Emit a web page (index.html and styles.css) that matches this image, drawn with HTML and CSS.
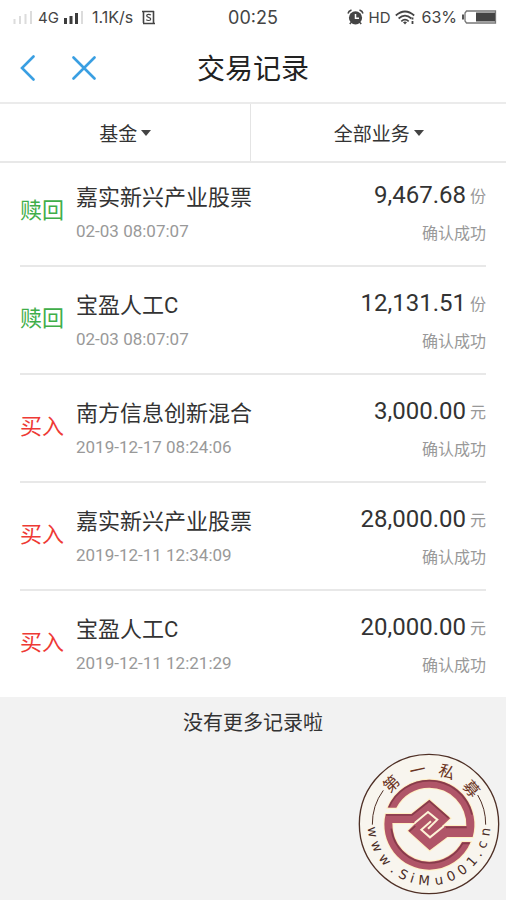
FILE: index.html
```html
<!DOCTYPE html>
<html lang="zh-CN">
<head>
<meta charset="utf-8">
<meta name="viewport" content="width=device-width, initial-scale=1">
<title>交易记录</title>
<link rel="stylesheet" href="styles.css">
</head>
<body>
<div class="status">
  <div class="status-side">
    <svg class="signal" width="20" height="14" viewBox="0 0 20 14" aria-hidden="true"><path d="M1.5 14V9M7 14V6M12.5 14V4M18 14V1" stroke="#dcdcdc" stroke-width="2"/></svg>
    <span class="net">4G</span>
    <svg class="signal" width="20" height="14" viewBox="0 0 20 14" aria-hidden="true"><path d="M1.5 14V8M7 14V6M12.5 14V3" stroke="#3c3c3c" stroke-width="3"/><path d="M18 14V1" stroke="#dcdcdc" stroke-width="2"/></svg>
    <span class="speed">1.1K/s</span>
    <svg class="sim" width="13" height="15" viewBox="0 0 13 15" aria-hidden="true"><path d="M1.5 13V1.5M0 1.5H12M11.5 1V13.5M1 13.5H13" fill="none" stroke="#444" stroke-width="1.6"/><path d="M8.8 5.2C8 4.2 4.7 4 4.7 5.8C4.7 7.8 8.7 6.8 8.7 9C8.7 11 5.2 10.8 4.3 9.6" fill="none" stroke="#444" stroke-width="1.2"/></svg>
  </div>
  <time class="clock">00:25</time>
  <div class="status-side status-right">
    <svg width="17" height="16" viewBox="0 0 17 16" aria-hidden="true"><circle cx="8.5" cy="8.8" r="6.6" fill="#444"/><path d="M1 4.5Q1.5 2 4.5 1M16 4.5Q15.5 2 12.5 1" fill="none" stroke="#444" stroke-width="1.5"/><path d="M4 13.5L2.8 15M13 13.5L14.2 15" stroke="#444" stroke-width="1.5"/><path d="M8.5 5V9.2H12" fill="none" stroke="#fff" stroke-width="1.5"/></svg>
    <span class="net">HD</span>
    <svg width="21" height="15" viewBox="0 0 21 15" aria-hidden="true"><g fill="none" stroke="#444" stroke-width="1.7"><path d="M.8 5.5Q10 -2.5 19.2 5.5"/><path d="M3.6 8.5Q10 2.8 16.4 8.5"/><path d="M6.3 11.3Q10 8 13.7 11.3"/></g><path d="M8 12.2Q10 10.8 12 12.2L10 14.5Z" fill="#444"/><path d="M17.5 7.5V9.5M17.5 11V14" stroke="#444" stroke-width="1.8"/></svg>
    <span class="percent">63%</span>
    <svg width="35" height="14" viewBox="0 0 35 14" aria-hidden="true"><path d="M4.5 1H33.5V13H4.5L3 11V3Z" fill="#fff" stroke="#777" stroke-width="1.3"/><path d="M1 4.5V9.5" stroke="#555" stroke-width="2"/><path d="M14 2.5H33V11.5H14Z" fill="#444"/></svg>
  </div>
</div>
<header class="bar">
  <div class="bar-actions">
    <button class="icon-button" type="button" aria-label="返回"><svg width="16" height="26" viewBox="0 0 16 26"><path d="M13.5 1.5L2 13L13.5 24.5" fill="none" stroke="#3a9fe2" stroke-width="2.6" stroke-linecap="round"/></svg></button>
    <button class="icon-button" type="button" aria-label="关闭"><svg width="24" height="24" viewBox="0 0 24 24"><path d="M1.5 1.5L22.5 22.5M22.5 1.5L1.5 22.5" fill="none" stroke="#3a9fe2" stroke-width="2.6" stroke-linecap="round"/></svg></button>
  </div>
  <h1 class="title">交易记录</h1>
</header>
<nav class="filters">
  <button class="filter" type="button">基金<span class="caret"></span></button>
  <button class="filter" type="button">全部业务<span class="caret"></span></button>
</nav>
<main>
  <ul class="records">
    <li class="record">
      <span class="kind sell">赎回</span>
      <div class="fund"><h2 class="name">嘉实新兴产业股票</h2><time class="date">02-03 08:07:07</time></div>
      <div class="result"><p class="amount">9,467.68<span class="unit">份</span></p><p class="state">确认成功</p></div>
    </li>
    <li class="record">
      <span class="kind sell">赎回</span>
      <div class="fund"><h2 class="name">宝盈人工C</h2><time class="date">02-03 08:07:07</time></div>
      <div class="result"><p class="amount">12,131.51<span class="unit">份</span></p><p class="state">确认成功</p></div>
    </li>
    <li class="record">
      <span class="kind buy">买入</span>
      <div class="fund"><h2 class="name">南方信息创新混合</h2><time class="date">2019-12-17 08:24:06</time></div>
      <div class="result"><p class="amount">3,000.00<span class="unit">元</span></p><p class="state">确认成功</p></div>
    </li>
    <li class="record">
      <span class="kind buy">买入</span>
      <div class="fund"><h2 class="name">嘉实新兴产业股票</h2><time class="date">2019-12-11 12:34:09</time></div>
      <div class="result"><p class="amount">28,000.00<span class="unit">元</span></p><p class="state">确认成功</p></div>
    </li>
    <li class="record">
      <span class="kind buy">买入</span>
      <div class="fund"><h2 class="name">宝盈人工C</h2><time class="date">2019-12-11 12:21:29</time></div>
      <div class="result"><p class="amount">20,000.00<span class="unit">元</span></p><p class="state">确认成功</p></div>
    </li>
  </ul>
  <p class="end">没有更多记录啦</p>
</main>
<svg class="seal" viewBox="-213 -213 426 426" role="img" aria-label="第一私募 www.SiMu001.cn">
  <circle r="209" fill="#f8f5ee" stroke="#4f3026" stroke-width="4"/>
  <path d="M-170 2A170 170 0 0 1 -137 -101M170 2A170 170 0 0 0 146 -87" fill="none" stroke="#4f3026" stroke-width="3"/>
  <g transform="translate(1 2)">
    <path class="emblem" d="M-125 -51A135 135 0 0 1 0 -135A135 135 0 0 1 130 37H54L1 77L-64 18L-40 -5H-111A111 111 0 0 0 0 111A111 111 0 0 0 98 52H124A135 135 0 0 1 0 135A135 135 0 0 1 -131 -32H-54L0 -75L63 -19L38 4H111A111 111 0 0 0 0 -111A111 111 0 0 0 -99 -51Z"/>
    <path class="emblem-shade" d="M-121 -53A132 132 0 0 1 0 -132A132 132 0 0 1 128 -30M-130 -29H-52L0 -71L58 -20M-114 12A115 115 0 0 0 0 115A115 115 0 0 0 100 56H121M50 8H112M-60 20L-42 4"/>
    <path class="emblem-line" d="M-44 -5L-4 -38L24 -15L-4 12M44 4L2 38L-24 15L5 -10"/>
  </g>
  <g class="seal-name">
    <text transform="rotate(-43)" y="-148">第</text>
    <text transform="rotate(-12)" y="-148">一</text>
    <text transform="rotate(19)" y="-148">私</text>
    <text transform="rotate(50)" y="-148">募</text>
  </g>
  <g class="seal-site">
    <text transform="rotate(82)" y="184">w</text>
    <text transform="rotate(67)" y="184">w</text>
    <text transform="rotate(51)" y="184">w</text>
    <text transform="rotate(38)" y="184">.</text>
    <text transform="rotate(27)" y="184">S</text>
    <text transform="rotate(17)" y="184">i</text>
    <text transform="rotate(5)" y="184">M</text>
    <text transform="rotate(-10)" y="184">u</text>
    <text transform="rotate(-23)" y="184">0</text>
    <text transform="rotate(-36)" y="184">0</text>
    <text transform="rotate(-49)" y="184">1</text>
    <text transform="rotate(-59)" y="184">.</text>
    <text transform="rotate(-69)" y="184">c</text>
    <text transform="rotate(-82)" y="184">n</text>
  </g>
</svg>
</body>
</html>
```
FILE: styles.css
```css
* { box-sizing: border-box; }

body {
  margin: 0;
  min-height: 100vh;
  background: #f2f2f2;
  color: #333;
  font-family: Roboto, "Noto Sans CJK SC", sans-serif;
}

h1, h2, p, ul { margin: 0; padding: 0; font-weight: 400; }

button {
  padding: 0;
  border: 0;
  background: none;
  color: inherit;
  font: inherit;
}

svg { display: block; flex: none; }

.status {
  display: grid;
  grid-template-columns: 1fr auto 1fr;
  align-items: center;
  height: 34px;
  padding: 0 9px;
  background: #fff;
  color: #444;
  font-family: Inter, sans-serif;
}

.status-side { display: flex; align-items: center; gap: 5px; padding-left: 4px; }
.status-right { justify-content: flex-end; padding-left: 0; }
.net { font-size: 15px; }
.speed { margin-left: 3px; font-size: 16px; }
.sim { margin-left: 4px; }
.clock { font-size: 18px; }
.percent { font-size: 16px; }

.bar {
  display: grid;
  grid-template-columns: 1fr auto 1fr;
  align-items: center;
  height: 70px;
  padding: 0 20px;
  border-bottom: 2px solid #ebebeb;
  background: #fff;
}

.bar-actions { display: flex; align-items: center; gap: 36px; }
.icon-button { display: block; }
.title { padding-top: 4px; color: #222; font-size: 28px; line-height: 40px; }

.filters {
  display: grid;
  grid-template-columns: 99fr 101fr;
  height: 59px;
  border-bottom: 2px solid #e8e8e8;
  background: #fff;
}

.filter {
  display: flex;
  align-items: center;
  justify-content: center;
  gap: 4px;
  font-size: 19px;
}

.filter + .filter { border-left: 1px solid #e4e4e4; }

.caret {
  border: 5px solid transparent;
  border-top: 6px solid #444;
  border-bottom: 0;
}

.records {
  padding: 0 20px;
  background: #fff;
  list-style: none;
}

.record {
  display: grid;
  grid-template-columns: 44px 1fr auto;
  column-gap: 12px;
  height: 108px;
  padding-top: 20px;
}

.record:first-child { height: 102px; padding-top: 16px; }
.record + .record { border-top: 2px solid #e8e8e8; }

.kind { padding-top: 16px; font-size: 22px; line-height: 32px; }
.sell { color: #3fae49; }
.buy { color: #ee3a35; }
.name { font-size: 22px; line-height: 38px; }
.date { display: block; font-size: 17px; line-height: 28px; color: #999; }
.result { text-align: right; }
.amount { font-size: 24px; line-height: 32px; }
.unit { margin-left: 4px; font-size: 16px; color: #999; vertical-align: 1px; }
.state { font-size: 16px; line-height: 42px; color: #999; }

.end { font-size: 20px; line-height: 52px; text-align: center; }

.seal {
  position: absolute;
  right: 6px;
  bottom: 5px;
  width: 142px;
  height: 142px;
}

.emblem {
  fill: #b05568;
  stroke: #fff0c4;
  stroke-width: 6px;
  paint-order: stroke;
}

.emblem-line { fill: none; stroke: #fdf3d6; stroke-width: 6px; }
.emblem-shade { fill: none; stroke: #6c2935; stroke-width: 5px; opacity: .6; }
.seal text { text-anchor: middle; }
.seal-name { fill: #6a3322; font-size: 48px; font-family: "Noto Sans CJK SC", sans-serif; }
.seal-site { fill: #4a2c26; font-size: 40px; font-family: "DejaVu Sans", sans-serif; }
```
